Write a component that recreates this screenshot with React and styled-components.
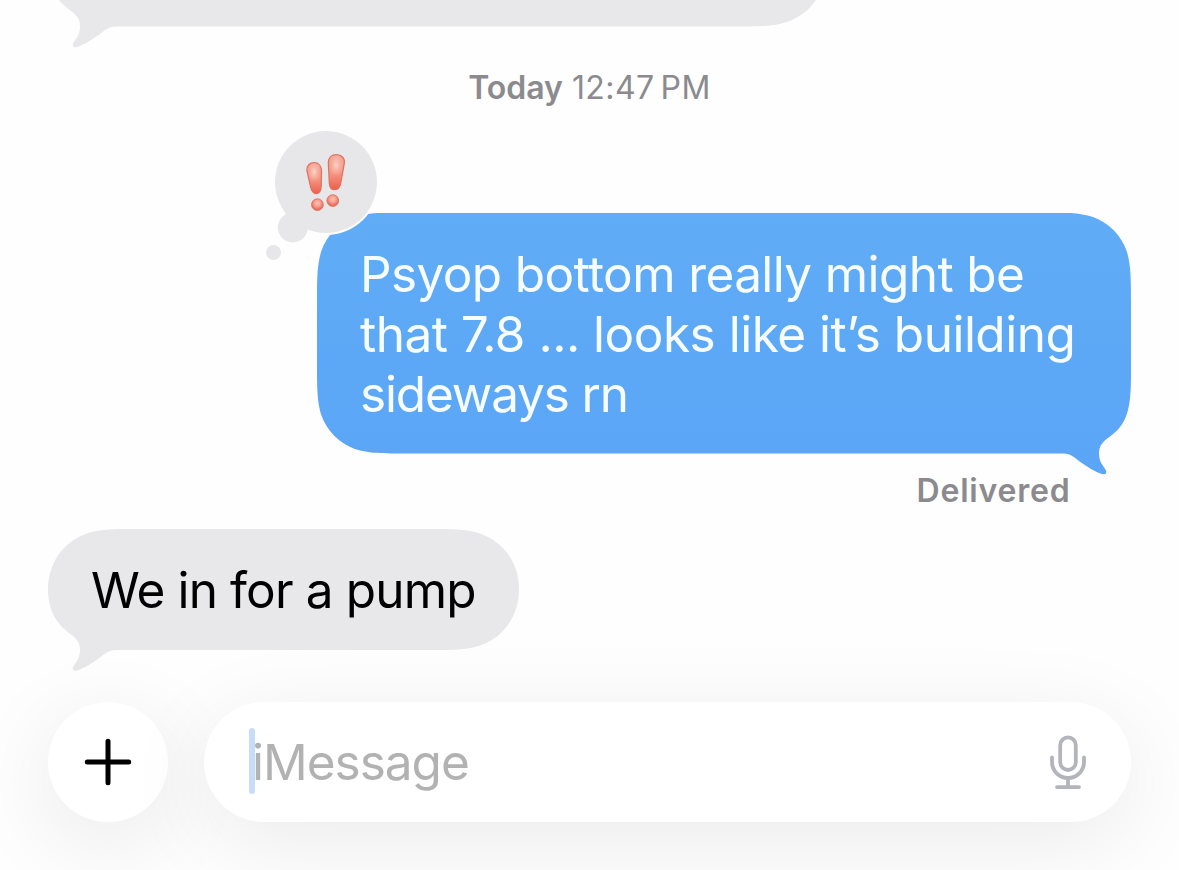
import styled, { createGlobalStyle } from "styled-components";

const GlobalStyle = createGlobalStyle`
    * {
        box-sizing: border-box;
    }
    body {
        margin: 0;
        background: #fefefe;
        font-family: Inter, "Liberation Sans", sans-serif;
    }
`;

// outline of a message bubble, tail hangs 21px under the bottom right corner
const sentShape = (w, h) => `M 91.7 0 H ${w - 91.7}
    C ${w - 65.3} 0 ${w - 52.1} 0 ${w - 37.9} 4.5
    C ${w - 22.4} 10.1 ${w - 10.1} 22.4 ${w - 4.5} 37.9
    C ${w} 52.1 ${w} 65.3 ${w} 91.7
    V ${h - 80}
    C ${w} ${h - 52} ${w - 2} ${h - 35} ${w - 14} ${h - 23}
    C ${w - 20} ${h - 17} ${w - 26} ${h - 14.5} ${w - 30} ${h - 8.5}
    C ${w - 33.5} ${h - 2} ${w - 32} ${h + 7} ${w - 28.5} ${h + 11.5}
    L ${w - 25.3} ${h + 16.5}
    C ${w - 23.5} ${h + 19.5} ${w - 26} ${h + 21.5} ${w - 29} ${h + 20.5}
    C ${w - 38} ${h + 18} ${w - 50} ${h + 9} ${w - 58} ${h + 3}
    Q ${w - 62} ${h} ${w - 68} ${h}
    H 91.7
    C 65.3 ${h} 52.1 ${h} 37.9 ${h - 4.5}
    C 22.4 ${h - 10.1} 10.1 ${h - 22.4} 4.5 ${h - 37.9}
    C 0 ${h - 52.1} 0 ${h - 65.3} 0 ${h - 91.7}
    V 91.7
    C 0 65.3 0 52.1 4.5 37.9
    C 10.1 22.4 22.4 10.1 37.9 4.5
    C 52.1 0 65.3 0 91.7 0 Z`.replace(/\s+/g, " ");

const receivedShape = (w, h) => `M 84 0 H ${w - 84}
    C ${w - 58} 0 ${w - 50} 1 ${w - 39} 4.5
    C ${w - 15} 13 ${w} 34 ${w} 60
    C ${w} ${h - 34} ${w - 15} ${h - 13} ${w - 39} ${h - 4.5}
    C ${w - 50} ${h - 1} ${w - 58} ${h} ${w - 84} ${h}
    H 68
    Q 62 ${h} 58 ${h + 3}
    C 50 ${h + 9} 38 ${h + 18} 29 ${h + 20.5}
    C 26 ${h + 21.5} 23.5 ${h + 19.5} 25.3 ${h + 16.5}
    L 28.5 ${h + 11.5}
    C 32 ${h + 7} 33.5 ${h - 2} 30 ${h - 8.5}
    C 26 ${h - 14.5} 20 ${h - 17} 14 ${h - 23}
    C 4.5 ${h - 33} 0 ${h - 46} 0 ${h - 60}
    C 0 34 15 13 39 4.5
    C 50 1 58 0 84 0 Z`.replace(/\s+/g, " ");

const Screen = styled.main`
    width: 1179px;
    height: 870px;
    padding: 0 48px;
    display: flex;
    flex-direction: column;
    overflow: hidden;
    background: #fefefe;
`;

const Bubble = styled.div`
    position: relative;
    flex: none;
    display: flex;
    flex-direction: column;
    align-self: ${({ $sent }) => ($sent ? "flex-end" : "flex-start")};
    width: ${({ $width }) => $width}px;
    height: ${({ $height }) => $height}px;
    padding: 31px 43px;
    color: ${({ $sent }) => ($sent ? "#f7fdff" : "#000")};
    font-size: 49.5px;
    line-height: 60px;
    white-space: nowrap;

    &::before {
        content: "";
        position: absolute;
        inset: 0 0 -24px;
        background: ${({ $sent }) =>
            $sent ? "linear-gradient(#61acf6, #5aa5f6)" : "#e8e8ea"};
        clip-path: path("${({ $sent, $width, $height }) =>
            $sent
                ? sentShape($width, $height)
                : receivedShape($width, $height)}");
    }
`;

const EarlierBubble = styled(Bubble)`
    margin-top: -93.5px;
`;

const Line = styled.span`
    position: relative;
    letter-spacing: ${({ $spacing }) => $spacing}px;
`;

const Timestamp = styled.time`
    margin-top: 41px;
    display: flex;
    justify-content: center;
    gap: 9px;
    color: #8a8a8f;
    font-size: 32px;
    line-height: 40px;
    letter-spacing: 0.45px;
    word-spacing: -3.5px;

    b {
        font-weight: 600;
        letter-spacing: 0;
    }
`;

const SentGroup = styled.section`
    position: relative;
    margin-top: 105px;
    display: flex;
    flex-direction: column;
    align-items: flex-end;
`;

const Reaction = styled.svg`
    position: absolute;
    left: 212px;
    top: -87.5px;
`;

const Status = styled.p`
    margin: 17.5px 60.5px 18px 0;
    color: #8a8a8f;
    font-size: 32px;
    font-weight: 600;
    line-height: 40px;
    letter-spacing: 0.8px;
`;

const Composer = styled.footer`
    position: relative;
    margin-top: 52px;
    display: flex;
    gap: 36px;
`;

const AddButton = styled.button`
    width: 120px;
    height: 120px;
    padding: 0;
    display: grid;
    place-items: center;
    border: 0;
    border-radius: 50%;
    background: #fff;
    box-shadow: 0 20px 90px rgba(0, 0, 0, 0.09);
`;

const Field = styled.div`
    flex: 1;
    height: 120px;
    padding: 0 44px 0 45px;
    display: flex;
    align-items: center;
    border-radius: 60px;
    background: #fff;
    box-shadow: 0 20px 90px rgba(0, 0, 0, 0.08);
`;

const Caret = styled.i`
    width: 6px;
    height: 66px;
    margin-bottom: 2px;
    border-radius: 3px;
    background: #c6ddf8;
`;

const Placeholder = styled.span`
    flex: 1;
    margin-left: -3px;
    color: #b2b2b3;
    font-size: 49.5px;
    line-height: 60px;
    letter-spacing: -1px;
`;

function Exclamations() {
    return (
        <Reaction width="120" height="140" viewBox="260 125 120 140">
            <defs>
                <linearGradient id="mark" x1="0" y1="0" x2="0" y2="1">
                    <stop offset="0" stopColor="#f0aa9c" />
                    <stop offset="0.5" stopColor="#f49a87" />
                    <stop offset="1" stopColor="#ee5f4b" />
                </linearGradient>
                <radialGradient id="shine">
                    <stop offset="0" stopColor="#ffdcd3" stopOpacity="0.9" />
                    <stop offset="1" stopColor="#ffb8a8" stopOpacity="0" />
                </radialGradient>
                <radialGradient id="dot" cx="0.5" cy="0.38">
                    <stop offset="0" stopColor="#ffc4b5" />
                    <stop offset="0.6" stopColor="#f69c8a" />
                    <stop offset="1" stopColor="#e86f5e" />
                </radialGradient>
            </defs>
            <circle cx="326" cy="182" r="53" fill="#fefefe" />
            <g fill="#e7e7e9">
                <circle cx="326" cy="182" r="51" />
                <circle cx="292.8" cy="227.5" r="15" />
                <circle cx="273.5" cy="252.5" r="7.5" />
            </g>
            <g fill="url(#mark)" stroke="#e0715f" strokeWidth="1.2">
                <path d="M306.9 170.5c-.5-5 3-7.8 7.3-7.8s7.3 3 7.3 7.8l-.3 15.8c-.2 4.6-1.8 7.2-4.7 7.3-3.1.1-5-2.4-5.9-6.4Z" />
                <path d="M328.3 162.5c0-5 3.4-7.9 8.2-7.9s8.6 3.5 7.8 8.8l-3.6 20.1c-.9 4.4-2.8 6.3-6 6.2-3.4-.1-5.2-2.7-5.4-6.6Z" />
            </g>
            <g fill="url(#dot)" stroke="#de6b59" strokeWidth="0.8">
                <circle cx="317.4" cy="204.7" r="5.9" />
                <circle cx="332.8" cy="200.6" r="5.9" />
            </g>
            <ellipse cx="314.2" cy="172" rx="6.4" ry="10" fill="url(#shine)" />
            <ellipse cx="336.2" cy="165" rx="7" ry="11" fill="url(#shine)" />
        </Reaction>
    );
}

function PlusIcon() {
    return (
        <svg width="48" height="48" viewBox="0 0 48 48">
            <path
                d="M24 3.3v41.4M3.3 24h41.4"
                stroke="#000"
                strokeWidth="5"
                strokeLinecap="round"
            />
        </svg>
    );
}

function MicIcon() {
    return (
        <svg
            width="38"
            height="56"
            viewBox="0 0 38 56"
            fill="none"
            stroke="#b3b4bc"
            strokeWidth="3.8"
            strokeLinecap="round"
        >
            <rect x="11.2" y="3.4" width="15.6" height="32.6" rx="7.8" />
            <path d="M3 23.5V28a16 16 0 0 0 32 0v-4.5M19 44v9M8 53.1h22" />
        </svg>
    );
}

const sentLines = [
    { text: "Psyop bottom really might be", spacing: -0.61 },
    { text: "that 7.8 ... looks like it’s building", spacing: -0.5 },
    { text: "sideways rn", spacing: -1.15 },
];

function App() {
    return (
        <>
            <GlobalStyle />
            <Screen>
                <EarlierBubble $width={778} $height={120} />
                <Timestamp>
                    <b>Today</b>
                    <span>12:47 PM</span>
                </Timestamp>
                <SentGroup>
                    <Bubble $sent $width={814} $height={241}>
                        {sentLines.map((line) => (
                            <Line key={line.text} $spacing={line.spacing}>
                                {line.text}
                            </Line>
                        ))}
                    </Bubble>
                    <Exclamations />
                    <Status>Delivered</Status>
                </SentGroup>
                <Bubble $width={471} $height={121}>
                    <Line $spacing={-0.85}>We in for a pump</Line>
                </Bubble>
                <Composer>
                    <AddButton aria-label="Add">
                        <PlusIcon />
                    </AddButton>
                    <Field>
                        <Caret />
                        <Placeholder>iMessage</Placeholder>
                        <MicIcon />
                    </Field>
                </Composer>
            </Screen>
        </>
    );
}

export default App;
